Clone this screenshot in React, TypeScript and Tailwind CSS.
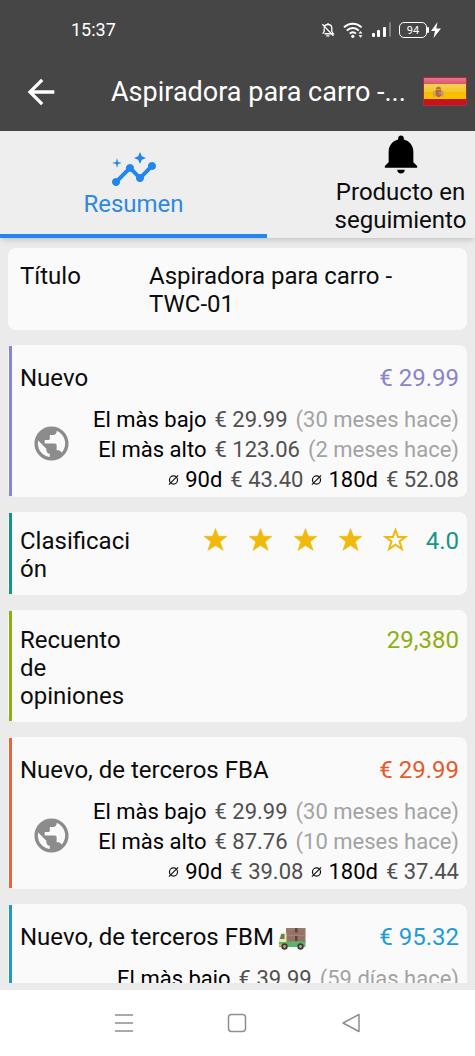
import React from "react";
import { MdArrowBack, MdInsights, MdPublic } from "react-icons/md";
import { IoMdNotifications } from "react-icons/io";
import clsx from "clsx";

const TITLE = "Aspiradora para carro - TWC-01";
const SHORT_TITLE = "Aspiradora para carro -...";

const StatusIcons: React.FC = () => (
    <div className="flex items-center gap-2 text-white">
        <svg width="14" height="16" viewBox="0 0 15 18" fill="none" stroke="currentColor" strokeWidth="1.5">
            <path d="M3.2 6.8C3.4 4.3 5 2.8 7.5 2.8s4.3 1.7 4.3 4.4v3.6l1.7 2.4H3.6M3.2 7v3.8l-1.7 2.4M7.5 1v1.6M1.2 2.6l12.4 13M5.5 15.6h3.6" />
        </svg>
        <svg width="21" height="17" viewBox="0 0 21 17" fill="none" stroke="currentColor" strokeWidth="2">
            <path d="M1 5.4C6 .4 13.6 .4 18.6 5.4M3.8 8.6c3.5-3.5 8.5-3.5 12 0M6.7 11.6c1.800-1.800 4.400-1.800 6.200 0" />
            <circle cx="9.8" cy="14.3" r="1.6" fill="currentColor" stroke="none" />
            <path d="M15.500 11.500l2-2.500 2 2.500zM15.500 13.300l2 2.500 2-2.500z" fill="currentColor" stroke="none" />
        </svg>
        <svg width="19" height="16" viewBox="0 0 19 16" fill="currentColor">
            <rect x="0" y="11" width="3" height="4" rx="1" />
            <rect x="5" y="8" width="3" height="7" rx="1" />
            <rect x="11" y="5" width="3" height="10" rx="1" />
            <rect x="17" y="0" width="2" height="15" rx="1" opacity="0.3" />
        </svg>
        <div className="flex items-center">
            <span className="flex h-4 w-7 items-center justify-center rounded-[5px] border border-white text-[11px] leading-none">
                94
            </span>
            <svg width="15" height="16" viewBox="0 0 15 16" fill="currentColor">
                <rect x="0" y="5" width="2" height="6" rx="1" />
                <path d="M10.5 0L4 9h4l-1.5 7L14 6.500H9.300z" />
            </svg>
        </div>
    </div>
);

const SpainFlag: React.FC = () => (
    <svg width="44" height="29" viewBox="0 0 44 29" role="img" aria-label="España">
        <defs>
            <linearGradient id="flag-red" x1="0" y1="0" x2="0" y2="1">
                <stop offset="0" stopColor="#e8758a" />
                <stop offset="1" stopColor="#d95463" />
            </linearGradient>
            <linearGradient id="flag-yellow" x1="0" y1="0" x2="0" y2="1">
                <stop offset="0" stopColor="#f6cf55" />
                <stop offset="0.5" stopColor="#f6c62e" />
                <stop offset="0.5" stopColor="#f5bc00" />
                <stop offset="1" stopColor="#fac600" />
            </linearGradient>
        </defs>
        <rect width="44" height="29" rx="1" fill="#a8303a" />
        <rect x="1" y="1" width="42" height="7" fill="url(#flag-red)" />
        <rect x="1" y="7" width="42" height="15" fill="url(#flag-yellow)" />
        <rect x="1" y="22" width="42" height="6" fill="#c81220" />
        <path d="M10 14h1.500v6H10zM19 14h1.500v6H19z" fill="#c59a72" />
        <path d="M12.500 13h6v5.500q-3 3.500-6 0z" fill="#b8624b" />
        <path d="M13 11q2.500-3 5 0v1.500h-5z" fill="#b27332" />
        <path d="M15.500 14.500h2.500v3h-2.500z" fill="#9d8b96" />
    </svg>
);

const Truck: React.FC = () => (
    <svg width="28" height="22" viewBox="0 0 28 22" className="mt-1 shrink-0" aria-hidden="true">
        <rect x="8" y="0" width="19.5" height="15" rx="0.5" fill="#967368" />
        <path d="M8 1h19.500M8 7.500h19.500" stroke="#ad8b7f" strokeWidth="0.6" />
        <path d="M17 0h2.500v4.500H17zM17 8h2.500v5H17z" fill="#5f443d" />
        <path d="M3 4.500h5.500V17H1v-5.500z" fill="#efe89b" />
        <path d="M3.300 6h3.200v5H1.800z" fill="#5f7780" />
        <path d="M1 14h8v-.500h18.500V19H1z" fill="#59b568" />
        <path d="M1 16h3v2H1z" fill="#e8b14e" />
        <circle cx="6.5" cy="18.5" r="3.2" fill="#46393a" />
        <circle cx="22.5" cy="18.5" r="3.2" fill="#46393a" />
        <circle cx="6.5" cy="18.5" r="1.4" fill="#b0a7a5" />
        <circle cx="22.5" cy="18.5" r="1.4" fill="#b0a7a5" />
    </svg>
);

const Star: React.FC<{ filled: boolean }> = ({ filled }) => (
    <svg width="25" height="25" viewBox="0 0 25 25" fill={filled ? "currentColor" : "none"} stroke="currentColor">
        <path
            d={
                filled
                    ? "M12.5 1.500L15.500 9.300H24L17.200 14.700L20.200 23.500L12.500 18.500L4.800 23.500L7.800 14.700L1 9.300H9.500z"
                    : "M12.500 3L15.100 9.900H22.500L16.500 14.400L18.900 22L12.500 17.600L6.100 22L8.500 14.400L2.500 9.900H9.900z"
            }
            strokeWidth={filled ? 0.5 : 2}
        />
    </svg>
);

const Diameter: React.FC = () => (
    <svg width="11" height="12" viewBox="0 0 12 12" fill="none" stroke="#111" strokeWidth="1.3" aria-label="promedio">
        <circle cx="6" cy="6" r="4.4" />
        <path d="M1 11L11 1" />
    </svg>
);

interface CardProps {
    accent?: string;
    className?: string;
    children: React.ReactNode;
}

const Card: React.FC<CardProps> = ({ accent, className, children }) => (
    <section className="flex rounded-lg bg-[#fafafa] py-px pl-px">
        <div className={clsx("w-[3px] shrink-0", accent)} />
        <div className={clsx("min-w-0 flex-1 pr-2 pl-2", className)}>{children}</div>
    </section>
);

interface PriceCardProps {
    label: string;
    icon?: React.ReactNode;
    price: string;
    accent: string;
    color: string;
    lowest: [string, string];
    highest: [string, string];
    averages: [string, string];
}

const PriceCard: React.FC<PriceCardProps> = ({ label, icon, price, accent, color, lowest, highest, averages }) => (
    <Card accent={accent} className="pt-[18px] pb-px">
        <div className="flex items-center justify-between">
            <h2 className="flex items-center gap-1">
                {label}
                {icon}
            </h2>
            <span className={color}>{price}</span>
        </div>
        <div className="mt-[13px] flex items-start justify-between">
            <MdPublic size={41} className="mt-[18px] ml-[11px] shrink-0 text-[#8c8c8c]" />
            <div className="text-[22px] leading-[30px] whitespace-nowrap text-[#505050]">
                <p className="flex justify-end gap-2">
                    <span className="text-black">El màs bajo</span>
                    <span>{lowest[0]}</span>
                    <span className="text-[#a3a3a3]">({lowest[1]})</span>
                </p>
                <p className="flex justify-end gap-2">
                    <span className="text-black">El màs alto</span>
                    <span>{highest[0]}</span>
                    <span className="text-[#a3a3a3]">({highest[1]})</span>
                </p>
                <p className="flex items-center justify-end gap-2">
                    <span className="flex items-center gap-1.5 text-black">
                        <Diameter />
                        90d
                    </span>
                    <span>{averages[0]}</span>
                    <span className="flex items-center gap-1.5 text-black">
                        <Diameter />
                        180d
                    </span>
                    <span>{averages[1]}</span>
                </p>
            </div>
        </div>
    </Card>
);

export default function App() {
    return (
        <div className="flex h-screen flex-col overflow-hidden bg-[#ebebeb] font-['Roboto',sans-serif] text-[24px] leading-7 text-[#0c0c0c]">
            <header className="shrink-0 bg-[#464646] text-white">
                <div className="flex h-[60px] items-center justify-between pr-[33px] pl-[71px]">
                    <time className="text-[18px]">15:37</time>
                    <StatusIcons />
                </div>
                <div className="flex h-[71px] items-center pr-2 pb-2 pl-[21px]">
                    <button type="button" aria-label="Volver">
                        <MdArrowBack size={40} />
                    </button>
                    <h1 className="ml-[50px] min-w-0 flex-1 text-[27px] leading-8 whitespace-nowrap">{SHORT_TITLE}</h1>
                    <div className="shrink-0">
                        <SpainFlag />
                    </div>
                </div>
            </header>

            <nav className="relative z-10 flex h-[107px] shrink-0 overflow-hidden bg-[#eeeeee] shadow-md" role="tablist">
                <button
                    type="button"
                    role="tab"
                    aria-selected="true"
                    className="flex w-[267px] shrink-0 flex-col items-center justify-center border-b-4 border-[#2385ee] pb-0.5 text-[#2f89e0]"
                >
                    <MdInsights size={48} className="text-[#2385ee]" />
                    <span className="-mt-1">Resumen</span>
                </button>
                <button
                    type="button"
                    role="tab"
                    aria-selected="false"
                    className="flex w-[267px] shrink-0 flex-col items-center justify-center px-16 pb-1"
                >
                    <IoMdNotifications size={48} className="text-black" />
                    Producto en seguimiento
                </button>
            </nav>

            <main className="flex min-h-0 flex-1 flex-col gap-[15px] overflow-hidden px-2 pt-[10px] *:shrink-0">
                <Card className="flex pt-[13px] pb-[11px]">
                    <h2 className="w-[129px] shrink-0">Título</h2>
                    <p className="max-w-[260px]">{TITLE}</p>
                </Card>

                <PriceCard
                    label="Nuevo"
                    price="€ 29.99"
                    accent="bg-[#8884d8]"
                    color="text-[#8884d0]"
                    lowest={["€ 29.99", "30 meses hace"]}
                    highest={["€ 123.06", "2 meses hace"]}
                    averages={["€ 43.40", "€ 52.08"]}
                />

                <Card accent="bg-[#159588]" className="flex items-start justify-between pt-[14px] pb-[11px]">
                    <h2 className="w-[114px] break-words">Clasificación</h2>
                    <div className="flex items-start">
                        <div className="mr-[18px] flex gap-5 text-[#f0b90b]" role="img" aria-label="4 de 5 estrellas">
                            {[1, 2, 3, 4, 5].map((n) => (
                                <Star key={n} filled={n <= 4} />
                            ))}
                        </div>
                        <span className="text-[#159588]">4.0</span>
                    </div>
                </Card>

                <Card accent="bg-[#8db010]" className="flex items-start justify-between pt-[15px] pb-[11px]">
                    <h2 className="w-[114px] break-words">Recuento de opiniones</h2>
                    <span className="text-[#8db010]">29,380</span>
                </Card>

                <PriceCard
                    label="Nuevo, de terceros FBA"
                    price="€ 29.99"
                    accent="bg-[#e8653a]"
                    color="text-[#e8592b]"
                    lowest={["€ 29.99", "30 meses hace"]}
                    highest={["€ 87.76", "10 meses hace"]}
                    averages={["€ 39.08", "€ 37.44"]}
                />

                <PriceCard
                    label="Nuevo, de terceros FBM"
                    icon={<Truck />}
                    price="€ 95.32"
                    accent="bg-[#2196cf]"
                    color="text-[#1f9bd8]"
                    lowest={["€ 39.99", "59 días hace"]}
                    highest={["€ 129.99", "8 meses hace"]}
                    averages={["€ 89.90", "€ 92.15"]}
                />
            </main>

            <footer className="mt-[7px] flex h-[66px] shrink-0 items-center justify-around bg-white px-[67px] text-[#8f8f8f]">
                <button type="button" aria-label="Recientes">
                    <svg width="20" height="20" viewBox="0 0 20 20" stroke="currentColor" strokeWidth="1.5">
                        <path d="M1 2h18M1 10h18M1 18h18" />
                    </svg>
                </button>
                <button type="button" aria-label="Inicio">
                    <svg width="20" height="20" viewBox="0 0 20 20" fill="none" stroke="currentColor" strokeWidth="1.5">
                        <rect x="1.5" y="1.5" width="17" height="17" rx="3" />
                    </svg>
                </button>
                <button type="button" aria-label="Atrás">
                    <svg width="20" height="20" viewBox="0 0 20 20" fill="none" stroke="currentColor" strokeWidth="1.5" strokeLinejoin="round">
                        <path d="M2 10L18 1.500v17z" />
                    </svg>
                </button>
            </footer>
        </div>
    );
}
